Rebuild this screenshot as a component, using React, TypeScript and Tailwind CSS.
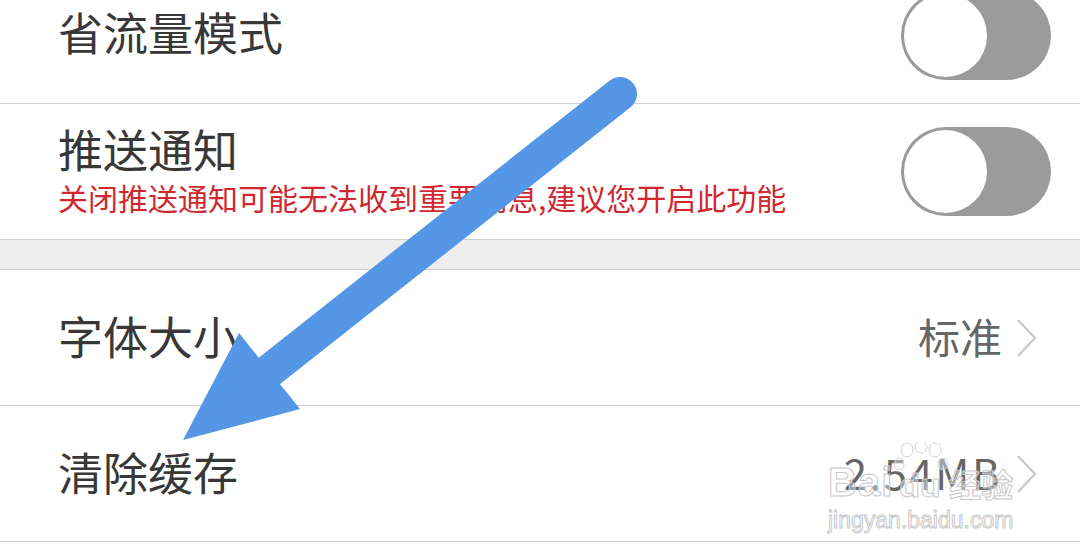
const cjk = "font-['Noto_Sans_CJK_SC','Noto_Sans',sans-serif]";

function Toggle() {
  return (
    <div className="w-[150px] h-[89px] rounded-full bg-[#9b9b9b] p-[3px] flex items-center">
      <div className="w-[83px] h-[83px] rounded-full bg-white" />
    </div>
  );
}

function Chevron() {
  return (
    <svg width="22" height="40" viewBox="0 0 22 40" fill="none">
      <polyline points="2,2 19,20 2,38" stroke="#c8c8c8" strokeWidth="2.2" />
    </svg>
  );
}

function ToggleRow({ title, note }: { title: string; note?: string }) {
  return (
    <div className="h-[136px] border-b border-[#cfcfcf] flex items-center justify-between pl-[58px] pr-[29px]">
      <div className="flex flex-col pb-[7px]">
        <div className="text-[45px] leading-[52px] text-[#383838]">{title}</div>
        {note && <div className="mt-[5px] text-[30px] leading-[34px] text-[#d0282e]">{note}</div>}
      </div>
      <Toggle />
    </div>
  );
}

function NavRow({ title, value, wide }: { title: string; value: string; wide?: boolean }) {
  return (
    <div className="h-[136px] border-b border-[#cfcfcf] flex items-center justify-between pl-[58px] pr-[42px]">
      <div className="pb-[4px] text-[45px] leading-[52px] text-[#383838]">{title}</div>
      <div className="flex items-center gap-[14px]">
        <span className={`pb-[3px] text-[42px] leading-[50px] text-[#666666] ${wide ? "tracking-[2.5px]" : ""}`}>{value}</span>
        <Chevron />
      </div>
    </div>
  );
}

function Watermark() {
  const outline = "text-white/40 [-webkit-text-stroke:1px_#c8c8c8]";
  return (
    <div className="absolute left-[828px] top-[442px] w-[195px] pointer-events-none">
      <div className="flex items-end h-[60px]">
        <span className={`font-['Liberation_Sans',sans-serif] font-bold text-[40px] leading-[40px] tracking-[1px] ${outline}`}>Bai</span>
        <div className="relative w-[56px] h-[60px]">
          <svg width="56" height="60" viewBox="0 0 56 60" className="absolute inset-0">
            <g fill="rgba(255,255,255,0.4)" stroke="#d2d2d2" strokeWidth="1">
              <ellipse cx="14" cy="8" rx="6" ry="7" />
              <ellipse cx="28" cy="5" rx="6" ry="6" />
              <ellipse cx="42" cy="8" rx="6" ry="7" />
              <ellipse cx="50" cy="22" rx="5" ry="6" />
              <ellipse cx="6" cy="22" rx="5" ry="6" />
            </g>
          </svg>
          <span className={`absolute left-[6px] bottom-0 font-['Liberation_Sans',sans-serif] font-bold text-[34px] leading-[34px] ${outline}`}>du</span>
        </div>
        <span className={`${cjk} font-bold text-[32px] leading-[38px] ${outline}`}>经验</span>
      </div>
      <div className={`mt-[6px] font-['Liberation_Sans',sans-serif] text-[23px] leading-[24px] ${outline}`}>jingyan.baidu.com</div>
    </div>
  );
}

export default function App() {
  return (
    <div className={`relative w-[1080px] h-[560px] overflow-hidden bg-white ${cjk}`}>
      <div className="-mt-[32px]">
        <ToggleRow title="省流量模式" />
        <ToggleRow title="推送通知" note="关闭推送通知可能无法收到重要消息,建议您开启此功能" />
        <div className="h-[30px] bg-[#eeeeee] border-b border-[#cfcfcf]" />
        <NavRow title="字体大小" value="标准" />
        <NavRow title="清除缓存" value="2.54MB" wide />
      </div>

      <Watermark />

      <svg className="absolute inset-0 pointer-events-none" width="1080" height="560" viewBox="0 0 1080 560">
        <line x1="620" y1="94" x2="268" y2="372" stroke="#5597e6" strokeWidth="34" strokeLinecap="round" />
        <polygon points="183,440 239,333 300,409" fill="#5597e6" />
      </svg>
    </div>
  );
}
